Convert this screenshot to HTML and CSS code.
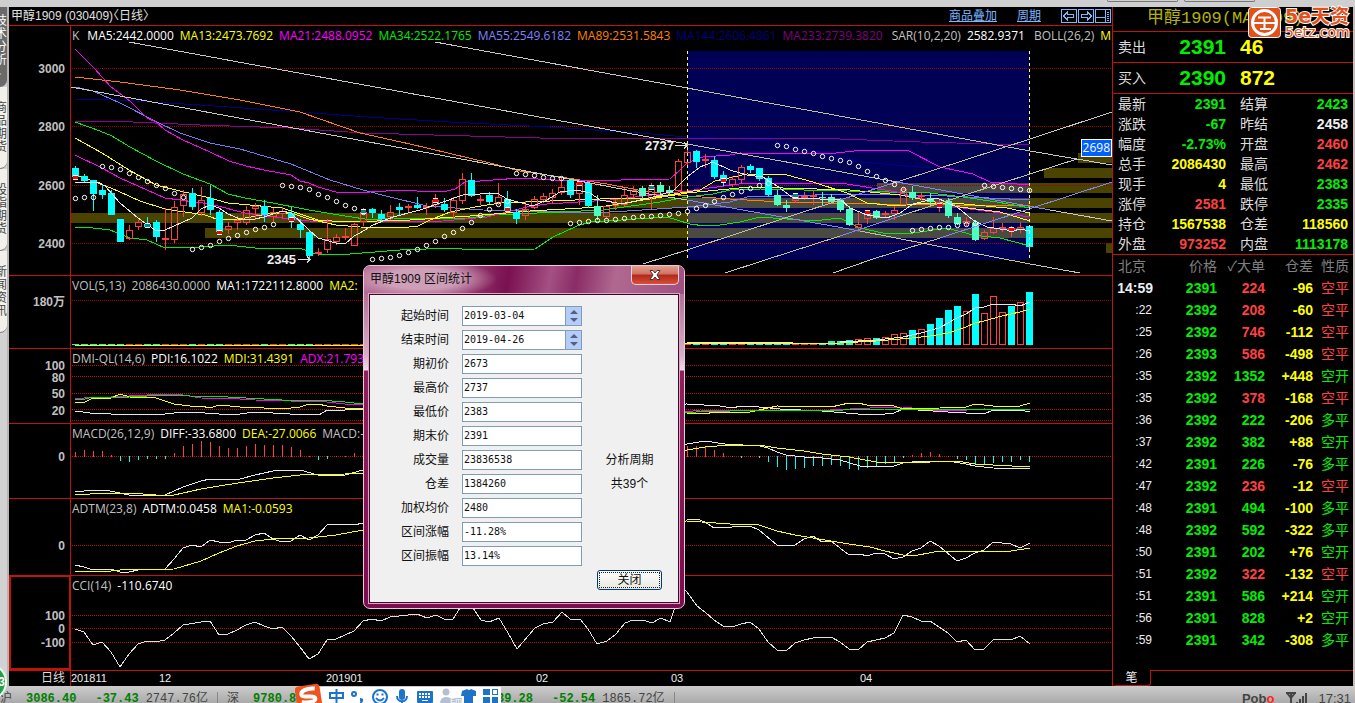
FILE: index.html
```html
<!DOCTYPE html>
<html lang="zh-CN">
<head>
<meta charset="utf-8">
<title>甲醇1909 日线</title>
<link rel="stylesheet" href="styles.css">
</head>
<body>
<div class="app">
  <div class="topstrip"><span class="stub"></span><span class="stub"></span></div>
  <div class="workspace">
    <nav class="sidetabs">
      <a href="#tech" class="sidetab current"><span>技术分析▸</span></a>
      <a href="#goods" class="sidetab"><span>商品期货</span></a>
      <a href="#index" class="sidetab"><span>股指期货</span></a>
      <a href="#news" class="sidetab"><span>新闻资讯</span></a>
    </nav>

    <main class="charts">
      <header class="chart-head">
        <h1>甲醇1909 (030409)〈日线〉</h1>
        <a href="#overlay">商品叠加</a>
        <a href="#period">周期</a>
        <div class="head-icons">
          <button aria-label="后退"><svg width="16" height="14"><rect x=".5" y=".5" width="15" height="13"/><path d="M2.5 7l4-4v2.5h6v3h-6V11z"/></svg></button>
          <button aria-label="前进"><svg width="16" height="14"><rect x=".5" y=".5" width="15" height="13"/><path d="M13.500 7l-4-4v2.500h-6v3h6V11z"/></svg></button>
          <button aria-label="布局"><svg width="16" height="14"><rect x=".5" y=".5" width="15" height="13"/><path d="M10.500 0v14M1 8.500h9M12 3.500h2M12 5.500h2M12 7.500h2M12 9.500h2M12 11.500h2"/></svg></button>
        </div>
      </header>

      <section class="panel panel-k">
        <svg class="axis" data-top="26" data-labels="3000:68,2800:126,2600:185,2400:243"></svg>
        <div class="plot"><svg id="k" data-top="26"></svg>
          <div class="legend"><span class="gray key">K</span><span>MA5:2442.0000</span><span class="yellow">MA13:2473.7692</span><span class="magenta">MA21:2488.0952</span><span class="green">MA34:2522.1765</span><span class="slate">MA55:2549.6182</span><span class="orange">MA89:2531.5843</span><span class="navy">MA144:2606.4861</span><span class="purple wide">MA233:2739.3820</span><span class="gray">SAR(10,2,20)</span><span class="wide">2582.9371</span><span class="gray">BOLL(26,2)</span><span class="yellow">M</span></div>
          <div class="price-tag">2698</div>
        </div>
      </section>
      <section class="panel panel-vol">
        <svg class="axis" data-top="276" data-labels="180万:301"></svg>
        <div class="plot"><svg id="vol" data-top="276"></svg>
          <div class="legend"><span class="gray">VOL(5,13)</span><span class="gray">2086430.0000</span><span>MA1:1722112.8000</span><span class="yellow">MA2:</span></div></div>
      </section>
      <section class="panel panel-dmi">
        <svg class="axis" data-top="349" data-labels="100:365,80:377,50:393,20:410"></svg>
        <div class="plot"><svg id="dmi" data-top="349"></svg>
          <div class="legend"><span class="gray">DMI-QL(14,6)</span><span>PDI:16.1022</span><span class="yellow">MDI:31.4391</span><span class="magenta">ADX:21.793</span></div></div>
      </section>
      <section class="panel panel-macd">
        <svg class="axis" data-top="424" data-labels="0:456"></svg>
        <div class="plot"><svg id="macd" data-top="424"></svg>
          <div class="legend"><span class="gray">MACD(26,12,9)</span><span>DIFF:-33.6800</span><span class="yellow">DEA:-27.0066</span><span class="gray">MACD:-</span></div></div>
      </section>
      <section class="panel panel-adtm">
        <svg class="axis" data-top="499" data-labels="0:545"></svg>
        <div class="plot"><svg id="adtm" data-top="499"></svg>
          <div class="legend"><span class="gray">ADTM(23,8)</span><span>ADTM:0.0458</span><span class="yellow">MA1:-0.0593</span></div></div>
      </section>
      <section class="panel panel-cci">
        <svg class="axis active" data-top="577" data-labels="100:615,0:628,-100:642"></svg>
        <div class="plot"><svg id="cci" data-top="576"></svg>
          <div class="legend"><span class="gray">CCI(14)</span><span>-110.6740</span></div></div>
      </section>
      <section class="panel panel-time">
        <div class="axis period">日线</div>
        <div class="plot"><svg id="time" data-top="671"></svg></div>
      </section>
    </main>

    <aside class="quote">
      <h2>甲醇1909(MA1909)</h2>
      <div class="bid"><span>卖出</span><b class="green">2391</b><b class="yellow">46</b></div>
      <div class="bid"><span>买入</span><b class="green">2390</b><b class="yellow">872</b></div>
      <div class="facts">
        <span>最新</span><b class="green">2391</b><span>结算</span><b class="green">2423</b>
        <span>涨跌</span><b class="green">-67</b><span>昨结</span><b class="white">2458</b>
        <span>幅度</span><b class="green">-2.73%</b><span>开盘</span><b class="red">2460</b>
        <span>总手</span><b class="yellow">2086430</b><span>最高</span><b class="red">2462</b>
        <span>现手</span><b class="yellow">4</b><span>最低</span><b class="green">2383</b>
        <span>涨停</span><b class="red">2581</b><span>跌停</span><b class="green">2335</b>
        <span>持仓</span><b class="yellow">1567538</b><span>仓差</span><b class="yellow">118560</b>
        <span>外盘</span><b class="red">973252</b><span>内盘</span><b class="green">1113178</b>
      </div>
      <table class="ticks">
        <thead><tr><th>北京</th><th>价格</th><th>✓大单</th><th>仓差</th><th>性质</th></tr></thead>
        <tbody id="ticks"></tbody>
      </table>
      <div class="quote-foot"><button>笔</button><i></i></div>
    </aside>
    <div class="edge"></div>
  </div>

  <footer class="status">
    <span class="name">沪</span><b class="up">3086.40</b><b class="up chg">-37.43</b><b class="amt">2747.76亿</b><i></i>
    <span class="name">深</span><b class="up">9780.82</b><b class="up chg">-118.93</b><b class="amt">33289.41亿</b><i></i><b class="up">1639.28</b><b class="up chg">-52.54</b><b class="amt">1865.72亿</b><i></i>
    <span class="brand">Pob<em>o</em></span>
    <svg class="signal" width="22" height="13"><path d="M0 1h10M5 1v12M1 1l4 5 4-5" fill="none" stroke="#444" stroke-width="2"/><path d="M10 10h2v3h-2zM13 7h2v6h-2zM16 4h2v9h-2zM19 1h2v12h-2z" fill="#444"/></svg>
    <time>17:31</time>
  </footer>

  <div class="badge">3</div>

  <div class="ime">
    <svg width="206" height="24" viewBox="0 0 206 24">
      <rect x="6" y="4" width="200" height="20" fill="#fff"/>
      <g transform="rotate(-9 14 14)"><rect x="1" y="2" width="25" height="24" rx="4" fill="#f0541e"/><path d="M21 6.500C13 4.500 6 7 7 11c1 3.500 13 1.500 13 5.500 0 3.500-8 3.500-14 1.500" fill="none" stroke="#fff" stroke-width="4"/></g>
      <g fill="none" stroke="#1e72c8" stroke-width="2">
        <path d="M35 10h13v5H35zM41.500 6v14"/>
        <circle cx="59" cy="11" r="2"/>
        <circle cx="85" cy="14" r="7"/><path d="M81 15q4 5 8 0M82.500 10.500v2M87.500 10.500v2"/>
        <path d="M102 13c0 7 10 7 10 0M107 18v4"/>
      </g>
      <path d="M65 15q4 0 3 3t-4 3q2-2 1-3z" fill="#1e72c8"/>
      <rect x="104" y="6" width="6" height="11" rx="3" fill="#1e72c8"/>
      <rect x="122" y="8" width="16" height="12" rx="1" fill="#1e72c8"/>
      <path d="M124 11h12M124 14h12" stroke="#fff" stroke-width="2" stroke-dasharray="2 1"/><path d="M127 17.500h6" stroke="#fff"/>
      <g fill="#b5bfd2"><circle cx="151" cy="9" r="3.500"/><path d="M145 21q0-7 6-7 5 0 5 3v4z"/><rect x="154" y="15" width="13" height="9"/></g>
      <path d="M167 8l5-2q2 2 4 0l5 2 0 5h-3v9h-9v-9h-3z" fill="#1e72c8"/>
      <path d="M188 6h7v6h-7zM188 14h7v7h-7zM197 14h6v7h-6z" fill="#1e72c8"/><rect x="197.500" y="6.500" width="5" height="5" fill="none" stroke="#1e72c8"/>
    </svg>
    <span>Em</span>
  </div>

  <div class="watermark">
    <svg width="33" height="31" viewBox="0 0 33 31"><rect x=".5" y=".5" width="32" height="30" rx="3" fill="#e2511c" stroke="#fff"/><circle cx="16.500" cy="15.500" r="12" fill="none" stroke="#fff" stroke-width="3"/><path d="M10 10.500h13M6 16h21M16.500 10v13M12 22h11" stroke="#fff" stroke-width="2"/></svg>
    <div><strong>5e天资</strong><small>5etz.com</small></div>
  </div>

  <form class="dialog" role="dialog" aria-labelledby="dlg-title">
    <div class="dlg-bar"><span id="dlg-title">甲醇1909 区间统计</span>
      <button type="button" class="close" aria-label="关闭窗口"><svg width="12" height="10" viewBox="0 0 12 10"><path d="M1 .5h3L6 3l2-2.500h3L8 5l3 4.500H8L6 7 4 9.500H1L4 5z" fill="#fff" stroke="#503038"/></svg></button></div>
    <div class="dlg-body">
      <div class="fields">
        <label for="f1">起始时间</label><div class="spin"><input id="f1" value="2019-03-04"><button type="button" aria-label="调整起始时间"></button></div>
        <label for="f2">结束时间</label><div class="spin"><input id="f2" value="2019-04-26"><button type="button" aria-label="调整结束时间"></button></div>
        <label for="f3">期初价</label><input id="f3" value="2673">
        <label for="f4">最高价</label><input id="f4" value="2737">
        <label for="f5">最低价</label><input id="f5" value="2383">
        <label for="f6">期末价</label><input id="f6" value="2391">
        <label for="f7">成交量</label><input id="f7" value="23836538">
        <label for="f8">仓差</label><input id="f8" value="1384260">
        <label for="f9">加权均价</label><input id="f9" value="2480">
        <label for="f10">区间涨幅</label><input id="f10" value="-11.28%">
        <label for="f11">区间振幅</label><input id="f11" value="13.14%">
      </div>
      <div class="side">
        <p>分析周期<br>共39个</p>
        <button type="button" class="ok"><span>关闭</span></button>
      </div>
    </div>
  </form>
</div>
<script src="chart.js"></script>
</body>
</html>
```

FILE: styles.css
```css
* { box-sizing: border-box; }
body { margin: 0; background: #000; color: #fff; font: 12px/16px "Liberation Sans", "Noto Sans CJK SC", sans-serif; overflow: hidden; }
h1, h2, p { margin: 0; font-weight: 400; }
button { margin: 0; padding: 0; border: 0; background: none; color: inherit; font: inherit; }
.app { position: relative; display: flex; flex-direction: column; height: 100vh; }
.topstrip { flex: none; height: 7px; padding-right: 100px; display: flex; justify-content: flex-end; gap: 6px; background: #cfcfcf; }
.stub { width: 71px; height: 2px; border: 1px solid #777; border-top: 0; border-radius: 0 0 3px 3px; }
.workspace { flex: 1; min-height: 0; display: flex; }
.green { color: #0e0; } .yellow { color: #ff0; } .magenta { color: #f0f; } .slate { color: #8080ff; } .orange { color: #ff8000; }
.navy { color: #000080; } .purple { color: #800080; } .gray { color: #c0c0c0; } .red { color: #ff4040; } .white { color: #eee; }

.sidetabs { flex: none; width: 9px; background: #d2d2d2; border-right: 2px solid #b8b4b4; }
.sidetab { display: flex; justify-content: flex-end; height: 82px; padding-top: 15px; overflow: hidden; background: #f1f0ea; color: #444; text-decoration: none; line-height: 13px; border-bottom: 1px solid #777; border-radius: 0 0 8px 0; }
.sidetab span { flex: none; width: 12px; word-break: break-all; }
.sidetab.current { background: #6a6a6a; color: #fff; height: 80px; padding-top: 8px; }

.charts { flex: 1; min-width: 0; display: flex; flex-direction: column; }
.chart-head { display: flex; align-items: center; height: 19px; padding: 0 1px 0 2px; border-bottom: 1px solid #c01408; }
.chart-head h1 { flex: 1; font-size: 12px; color: #e0e0e0; font-feature-settings: "halt"; }
.chart-head a { color: #79b8ff; margin-right: 20px; }
.head-icons { display: flex; gap: 1px; }
.head-icons button { height: 14px; display: flex; }
.head-icons svg { fill: none; stroke: #79b8ff; shape-rendering: crispEdges; }

.panel { display: flex; border-bottom: 1px solid #c01408; }
.panel-k { height: 250px; } .panel-vol { height: 73px; } .panel-dmi, .panel-macd { height: 75px; }
.panel-adtm { height: 77px; } .panel-cci { height: 95px; } .panel-time { height: 15px; border: 0; }
.axis { flex: none; width: 62px; height: 100%; border-right: 1px solid #c01408; font-size: 12px; font-weight: 700; fill: #c0c0c0; }
.axis.active { border: 2px solid #c01408; border-top-width: 1px; }
.period { padding-right: 5px; text-align: right; font-weight: 400; line-height: 14px; color: #ddd; }
.plot { flex: 1; min-width: 0; position: relative; overflow: hidden; }
.plot svg { display: block; width: 100%; height: 100%; shape-rendering: crispEdges; fill: none; }
.plot circle { shape-rendering: auto; }
.plot text { fill: #eee; font-size: 11px; }
.plot text.mark { font-size: 13px; font-weight: 700; }
.legend { position: absolute; left: 1px; top: 2px; display: flex; gap: 6px; white-space: nowrap; font: 12px/16px "Open Sans", "Noto Sans", sans-serif; }
.legend .wide { margin-right: 3px; }
.legend .key { margin-right: 2px; }
.price-tag { position: absolute; right: 0; top: 113px; padding: 0 1px; border: 1px solid #fff; background: #0060ff; font: 12px/16px "Open Sans", sans-serif; }

.quote { flex: none; width: 241px; display: flex; flex-direction: column; border-left: 1px solid #c01408; font-size: 14px; color: #ddd; }
.quote h2 { height: 25px; padding-left: 34px; white-space: nowrap; color: #b4b400; font: 17px/24px "Liberation Mono", "Noto Sans CJK SC", monospace; border-bottom: 1px solid #c01408; }
.bid { display: grid; grid-template-columns: 28px 80px 1fr; padding: 0 5px; height: 31px; line-height: 30px; border-bottom: 1px solid #c01408; }
.bid b { font-size: 21px; text-align: right; }
.bid b + b { text-align: left; padding-left: 14px; }
.facts { display: grid; grid-template-columns: 28px 1fr 42px 1fr; padding: 0 5px; line-height: 20px; border-bottom: 1px solid #c01408; }
.facts span { white-space: nowrap; }
.facts b { text-align: right; }
.facts :nth-child(4n + 3) { padding-left: 14px; }
.ticks { width: 100%; border-collapse: collapse; table-layout: fixed; line-height: 22px; }
.ticks th, .ticks td { padding: 0; height: 22px; text-align: right; font-weight: 700; white-space: nowrap; }
.ticks th { font-weight: 400; color: #808080; }
.ticks th:nth-child(1) { width: 40px; text-align: left; padding-left: 5px; }
.ticks th:nth-child(2) { width: 64px; } .ticks th:nth-child(3), .ticks th:nth-child(4) { width: 48px; }
.ticks th:nth-child(5), .ticks td:nth-child(5) { font-weight: 400; padding-right: 4px; }
.ticks td:first-child { color: #eee; }
.ticks tr + tr td:first-child { font-size: 12px; font-weight: 400; padding-right: 1px; }
.quote-foot { display: flex; height: 16px; margin-top: auto; }
.quote-foot button { width: 38px; font-size: 12px; line-height: 14px; color: #eee; border-right: 1px solid #c01408; border-bottom: 1px solid #c01408; border-radius: 0 0 3px 3px; }
.quote-foot i { flex: 1; border-top: 1px solid #c01408; }
.edge { flex: none; width: 2px; background: #c8bcbc; }

.status { flex: none; display: flex; height: 17px; padding: 6px 4px 0 0; overflow: hidden; background: linear-gradient(#ccc, #aaa); color: #444; font: 12px/14px "Liberation Mono", "Noto Sans CJK SC", monospace; white-space: nowrap; }
.status > * { flex: none; }
.status .up { color: #008000; margin-left: 14px; }
.status .chg { margin-left: 19px; }
.status .amt { margin-left: 7px; font-weight: 400; }
.status i { width: 1px; height: 12px; margin: 0 9px; background: #888; }
.brand { margin-left: auto; font: 700 13px/14px "Liberation Sans", sans-serif; }
.brand em { color: #f22; font-style: normal; }
.signal { margin: 0 10px 0 12px; }
.status time { font: 13px/14px "Liberation Sans", sans-serif; }

.badge { position: absolute; left: -26px; bottom: 3px; width: 33px; height: 36px; border: 2px solid #dfe; border-radius: 50%; background: #2a9d4a; text-align: right; font-weight: 700; line-height: 32px; }
.ime { position: absolute; left: 295px; bottom: -1px; height: 21px; }
.ime svg { display: block; }
.ime span { position: absolute; left: 155px; top: 14px; font: 8px/8px "Liberation Sans", sans-serif; color: #fff; }
.watermark { position: absolute; right: 2px; top: 7px; display: flex; gap: 4px; color: #e2511c; width: 105px; }
.watermark svg { flex: none; }
.watermark strong, .watermark small { display: block; -webkit-text-stroke: 2px #fff; paint-order: stroke fill; white-space: nowrap; font-family: "DejaVu Sans", "Noto Sans CJK SC", sans-serif; }
.watermark strong { font-size: 19px; line-height: 18px; }
.watermark small { font-size: 14px; line-height: 14px; }

.dialog { position: absolute; left: 363px; top: 265px; width: 322px; padding: 0 5px 5px; border: 1px solid #eec8dc; border-radius: 7px; background: linear-gradient(#a86088 0, #b0688f 20px, #d8b0c8 90px, #f0dce8 104px, #90205c 105px, #7c0c50 100%); color: #111; }
.dlg-bar { display: flex; height: 28px; margin: 0 -5px; padding: 0 5px 0 6px; border-radius: 6px 6px 0 0; background: radial-gradient(ellipse 75px 20px at 58px 13px, #d8b0c4cc 50%, transparent), linear-gradient(100deg, #b46b94 0, #a04a7c 28%, #7a1050 45%, #a45084 58%, #8a2c66 66%, #b06890 78%, #a05080 100%); }
.dlg-bar span { flex: 1; line-height: 26px; }
.close { width: 48px; height: 19px; border: 1px solid #f0d0d8; border-top: 0; border-radius: 0 0 5px 5px; background: linear-gradient(#e0a090 0, #d07060 45%, #b02818 50%, #d85038 100%); display: flex; align-items: center; justify-content: center; }
.dlg-body { display: flex; justify-content: space-between; padding: 11px 16px 12px 29px; border: 1px solid #400828; outline: 1px solid #d8a8c4; background: #f0f0f0; }
.fields { display: grid; grid-template-columns: 50px 120px; gap: 4px 13px; padding-bottom: 24px; }
.fields label { text-align: right; line-height: 20px; }
.fields input { width: 120px; height: 20px; margin: 0; padding: 0 1px 2px; border: 1px solid #7f9db9; background: #fff; color: #111; font: 10px "DejaVu Sans Mono", monospace; }
.spin { display: flex; height: 20px; }
.spin input { flex: 1; min-width: 0; border-right: 0; }
.spin button { position: relative; width: 17px; border: 1px solid #7f9db9; background: #b4ccf8; }
.spin button::before, .spin button::after { content: ""; position: absolute; left: 4px; border: 4px solid transparent; }
.spin button::before { top: -1px; border-bottom-color: #506080; }
.spin button::after { bottom: -1px; border-top-color: #506080; }
.side { display: flex; flex-direction: column; justify-content: flex-end; align-items: center; }
.side p { line-height: 24px; text-align: center; }
.ok { width: 65px; height: 20px; margin-top: 74px; padding: 1px; border: 1px solid #003c74; border-radius: 3px; background: linear-gradient(#fff, #e8e8e0); }
.ok span { display: block; border: 1px dotted #222; line-height: 14px; }
```

FILE: chart.js
```js
const LEFT = 71, STEP = 9, FIRST = 75;
const x = i => FIRST + i * STEP;
const NS = 'http://www.w3.org/2000/svg';

function el(parent, tag, attrs, text) {
  const n = document.createElementNS(NS, tag);
  for (const k in attrs) n.setAttribute(k, attrs[k]);
  if (text !== undefined) n.textContent = text;
  parent.appendChild(n);
  return n;
}
function canvas(id) {
  const svg = document.getElementById(id);
  return el(svg, 'g', { transform: `translate(${-LEFT},${-svg.dataset.top})` });
}
const line = (g, points, stroke) => el(g, 'polyline', { points, stroke });
const rect = (g, x0, y0, w, h, fill) => el(g, 'rect', { x: x0, y: y0, width: w, height: h, fill });
function grid(g, ys, color) {
  ys.forEach(y => el(g, 'path', { d: `M72 ${y}.5H3000`, stroke: color || '#c01408', 'stroke-dasharray': '1 1' }));
}
const WHITE = '#e8e8e8', YELLOW = '#ff0', GREEN = '#0e0', MAGENTA = '#f0f', CYAN = '#0ff', RED = '#ff4040';

document.querySelectorAll('svg.axis').forEach(svg => {
  svg.dataset.labels.split(',').forEach(s => {
    const [t, y] = s.split(':');
    el(svg, 'text', { x: svg.classList.contains('active') ? 54 : 56, y: y - svg.dataset.top + 5, 'text-anchor': 'end' }, t);
  });
});

/* candles: colour, body top, body bottom, wick top, wick bottom */
const candles = `c168,177,166,179 c176,181,174,182 c180,194,180,211 c190,195,184,199 c193,215,190,215 c219,242,219,242 r230,239,225,240 r222,227,220,230 c224,227,217,228 c222,237,220,242 r238,240,208,250 r207,240,201,243 r194,206,190,217 c193,207,188,210 r200,213,187,216 c198,210,185,215 c212,232,210,232 r226,230,222,234 r220,223,216,230 r210,223,206,225 r206,209,203,220 c206,215,200,222 r212,217,208,222 r211,214,207,219 c213,220,207,228 c224,230,219,238 c232,256,230,260 r252,254,248,256 r239,250,219,253 r237,242,234,245 r236,238,228,240 r224,246,223,246
r212,222,208,226 c209,213,208,218 c214,219,210,222 r212,217,205,220 c207,210,203,215 r206,208,204,213 c205,208,197,209 r206,208,203,215 r200,205,194,208 c204,210,198,212 r200,213,197,218 r179,201,173,204 c180,196,173,197 r199,201,195,205 c195,202,192,204 r197,203,183,205 c199,211,191,212 c212,219,209,224 r209,216,201,220 r199,208,196,209 r196,200,193,203 r193,198,189,204 r187,193,178,195 c180,195,180,198 r183,194,182,205 c183,206,183,208 c206,216,195,220 r206,217,206,219 r203,206,199,210 r195,205,188,206 r190,195,186,198 c188,196,186,199 r187,198,183,209 c185,192,182,195 c190,193,186,195 r161,191,159,192 r152,163,142,165 c151,162,150,168 r159,161,154,168 c160,177,156,179 c175,181,171,186
r179,185,176,187 r167,180,165,184 c166,170,164,173 c168,179,168,181 c178,195,176,197 c195,205,190,206 c205,208,200,212 r196,201,194,203 r196,198,192,200 r195,197,190,205 c197,198,192,206 c197,202,194,203 c200,210,198,212 c209,225,206,226 r224,228,212,232 r213,219,210,224 c211,218,210,219 r213,215,211,217 r210,214,206,220 r189,205,188,205 c192,198,186,200 r195,197,193,200 c198,202,193,206 r202,205,200,212 c201,216,198,218 c217,224,213,225 r221,224,217,226 c223,240,220,241 r232,239,230,240 r228,233,217,234 r227,229,223,232 r228,231,226,237 r227,230,222,233 c226,247,225,252`
  .split(/\s+/).map(s => [s[0], ...s.slice(1).split(',').map(Number)]);

/* price panel */
let g = canvas('k');
rect(g, 688, 51, 342, 209, '#000054');
[[71, 213], [205, 228], [613, 198], [877, 183], [1044, 168], [1078, 153], [1106, 243]].forEach(([x0, y0]) => {
  rect(g, x0, y0, 1112 - x0, 10, '#4a4400');
  if (x0 < 1030) { const s = Math.max(x0, 688); rect(g, s, y0, 1030 - s, 10, '#4b4a42'); }
});
grid(g, [68, 126, 185, 243], '#a00000');
line(g, '75,99 120,100 200,105 300,112 367,117 450,122 550,127 640,133 687,137 770,140 860,162 930,168', '#000090');
line(g, '75,121 110,121 200,125 290,128 363,133 540,138 700,138 840,139 920,142 1029,145', '#900090');
line(g, '75,77 120,82 180,90 240,100 300,112 360,133 410,144 490,163 520,171 567,178 607,184 643,191 687,196 730,199 780,202 880,204 1030,206', '#ff8000');
line(g, '75,87 93,91 120,103 157,122 180,133 210,143 240,149 291,164 330,180 363,190 390,197 427,206 483,210 527,211 593,213 627,211 687,207 730,202 747,197 850,194 947,196 1030,200', '#7878f0');
line(g, '75,122 100,131 112,136 130,147 156,161 183,174 210,184 228,194 245,198 273,203 309,210 345,216 372,220 393,218 460,219 493,215 560,212 603,210 660,202 687,197 713,194 730,190 760,189 847,191 930,193 963,197 997,202 1030,208', GREEN);
line(g, '75,155 102,168 111,173 120,178 165,198 210,204 245,213 282,218 309,221 360,222 443,221 487,217 527,207 547,204 610,200 643,196 687,191 747,183 813,183 847,184 897,192 927,200 963,208 1030,217', MAGENTA);
line(g, '75,49 84,58 94,68 111,87 130,101 147,118 156,122 165,130 183,140 210,152 229,161 246,166 264,170 291,175 300,181 309,183 318,187 336,192 354,193 403,190 417,191 447,191 455,189 465,182 480,181 520,178 573,181 670,179 680,170 687,163 703,157 730,155 740,153 827,154 863,150 907,150 940,167 973,174 990,182 1030,185', MAGENTA);
line(g, '75,138 102,153 129,170 156,185 180,191 210,198 228,203 282,208 318,220 345,222 410,220 470,216 530,211 600,207 687,193 750,187 850,190 900,195 960,207 1000,212 1030,221', YELLOW);
line(g, '75,175 90,180 111,188 140,201 165,209 205,215 219,220 240,219 273,213 291,213 309,219 336,225 360,227 400,228 418,226 430,220 450,212 475,207 500,203 600,199 650,198 680,193 700,190 715,181 747,174 787,175 813,182 847,193 867,203 897,206 925,203 953,203 1007,208 1030,213', YELLOW);
line(g, '75,228 85,227 110,230 130,238 147,240 165,248 200,247 228,245 255,248 300,248 312,253 325,255 350,254 400,250 453,248 470,250 535,249 553,237 577,226 590,222 667,217 690,224 705,226 720,225 740,222 760,217 813,221 840,218 860,228 883,233 913,233 947,228 973,235 1000,238 1030,246', GREEN);
candles.forEach(([c, t, b, wt, wb], i) => {
  const cx = x(i), col = c === 'c' ? (t > 183 && i > 55 ? '#4dffc0' : CYAN) : RED;
  if (c === 'c') { rect(g, cx, wt, 1, wb - wt, col); rect(g, cx - 3, t, 7, b - t, i === 106 ? CYAN : col); }
  else {
    rect(g, cx, wt, 1, Math.max(0, t - wt), col); rect(g, cx, b, 1, Math.max(0, wb - b), col);
    el(g, 'rect', { x: cx - 2.5, y: t + .5, width: 6, height: Math.max(1, b - t - 1), stroke: col });
  }
});
line(g, '75,183 98,182 105,186 120,203 138,218 155,230 165,230 183,222 192,218 201,209 210,205 219,208 228,214 240,219 255,219 264,217 282,211 291,213 309,230 318,238 336,243 345,244 354,236 360,233 373,225 393,217 420,210 443,202 463,195 497,193 507,199 533,206 547,200 560,192 577,190 590,193 600,200 623,204 653,197 673,191 687,177 700,167 713,162 730,170 747,175 763,177 780,188 793,198 820,199 840,199 850,208 867,215 887,218 900,213 913,204 937,198 957,207 973,220 987,227 1013,231 1020,229 1030,231', WHITE);
/* trend lines */
[['129,42 687,144', 0], ['687,144 897,182', 1], ['897,182 1050,210', 2], ['1050,210 1112,221', 0],
 ['435,42 687,88', 0], ['687,88 1030,151', 1], ['1030,151 1112,165', 0],
 ['71,87 510,168 643,193 687,200', 0], ['687,200 860,231', 2], ['860,231 1030,264', 1], ['1030,264 1080,273', 0],
 ['643,264 687,250', 0], ['687,250 840,200', 1], ['840,200 900,181', 2], ['900,181 1030,139', 1], ['1030,139 1112,112', 0],
 ['725,273 765,260', 0], ['765,260 840,236', 1], ['840,236 900,216', 2], ['900,216 1030,174', 1], ['1030,174 1077,159', 0],
 ['833,273 873,259', 0], ['873,259 940,238', 1], ['940,238 1112,182', 2]
].forEach(([p, c]) => line(g, p, ['#c8c8c8', '#c0c098', '#8484f0'][c]));
const sar = [198, 197, 197, 166, 167, 169, 173, 177, 181, 185, 188, 193, 197, 249, 247, 245, 241, 238, 235, 232, 229, 227, 224, 185, 186, 187, 189, 194, 197, 201, 205, 208, 212, 259, 258, 257, 255, 252, 249, 245, 241, 236, 232, 228, 222, 215, 209, 204, 201, 173, 174, 175, 177, 178, 178, 223, 222, 221, 220, 220, 219, 218, 217, 216, 216, 215, 214, 213, 211, 208, 205, 201, 197, 194, 191, 188, 185, 183, 145, 146, 149, 151, 153, 156, 158, 160, 162, 166, 171, 176, 180, 184, 189, 230, 229, 228, 227, 227, 225, 224, 223, 185, 186, 187, 188, 189, 190];
sar.forEach((y, i) => el(g, 'circle', { cx: x(i) + .5, cy: y + .5, r: 2.2, stroke: '#fff' }));
[[0, 177, 'r'], [8, 225, 'c'], [16, 232, 'r'], [24, 219, 'r'], [32, 211, 'c'], [40, 200, 'r'], [48, 209, 'r'], [56, 183, 'r'], [64, 187, 'c'], [72, 180, 'r'], [80, 195, 'c'], [88, 212, 'r'], [96, 205, 'r'], [104, 229, 'r']].forEach(([i, y, c]) => {
  rect(g, x(i) - 2, y - 2, 5, 5, '#fff'); rect(g, x(i) - 2, y - 1, 5, 3, c === 'r' ? '#f00' : '#088');
});
[687.5, 1029.5].forEach(v => el(g, 'path', { d: `M${v} 51V259`, stroke: '#ffff60', 'stroke-dasharray': '3 3' }));
el(g, 'text', { x: 645, y: 150, class: 'mark' }, '2737');
el(g, 'text', { x: 267, y: 264, class: 'mark' }, '2345');
el(g, 'path', { d: 'M675 145.500h12m-3-3l3 3-3 3M298 259.500h12m-3-3l3 3-3 3', stroke: '#ddd' });

/* volume */
g = canvas('vol');
grid(g, [300], '#a00000');
const vol = { 84: 341, 85: 341, 86: 340, 87: 339, 88: 338, 89: 338, 90: 337, 91: 334, 92: 333, 93: 330, 94: 329, 95: 324, 96: 318, 97: 310, 98: 306, 99: 311, 100: 294, 101: 313, 102: 296, 103: 312, 104: 306, 105: 302, 106: 292 };
candles.forEach(([c], i) => {
  if (i === 93 || i === 96 || i === 104) c = 'c';
  const t = vol[i] || (i < 68 ? 344 : 343);
  if (c === 'c' || t > 341) rect(g, x(i) - 3, t, 7, 345 - t, c === 'c' ? CYAN : RED);
  else el(g, 'rect', { x: x(i) - 2.5, y: t + .5, width: 6, height: 344 - t, stroke: RED });
});
line(g, '687,343 795,342 840,342 876,340 903,337 921,333 939,328 957,318 966,314 975,308 984,307 993,304 1011,304 1020,306 1030,302', WHITE);
line(g, '75,345 640,345 687,343 840,343 876,341 912,338 930,336 948,333 966,327 975,323 984,321 1002,316 1020,312 1030,309', YELLOW);

/* DMI */
g = canvas('dmi');
grid(g, [365, 376, 393, 409, 420]);
line(g, '75,398 84,398 111,397 129,396 147,395 165,394 183,395 201,398 240,399 255,400 291,401 318,401 345,404 363,405 687,412 700,410 750,411 780,410 810,411 870,408 903,407 930,410 950,411 984,409 1030,410', MAGENTA);
line(g, '75,411 90,413 111,414 129,415 147,414 165,414 183,412 205,413 219,414 240,414 255,412 290,414 319,415 327,410 345,410 363,409 687,404 720,406 732,408 741,406 759,407 780,409 822,411 858,414 885,414 894,413 903,409 948,412 966,413 984,414 993,410 1011,411 1020,410 1030,412', WHITE);
line(g, '75,402 85,402 93,398 111,398 120,394 130,397 156,398 165,401 174,404 190,406 201,406 210,408 219,405 240,407 264,408 282,409 300,407 309,404 318,404 327,406 345,408 363,409 687,413 705,414 714,412 750,412 768,408 777,406 831,407 849,403 858,403 867,405 894,406 903,409 940,408 966,407 975,404 1002,407 1020,406 1030,403', YELLOW);
line(g, '75,399 85,399 93,397 129,397 165,395 190,396 228,397 264,399 282,400 318,400 345,402 363,404 687,413 705,411 730,411 750,410 800,410 825,411 843,410 885,409 1030,409', GREEN);

/* MACD */
g = canvas('macd');
grid(g, [456]);
const left = [452, 450, 451, 451, 455, 460, 461, 459, 458, 458, 458, 453, 446, 444, 441, 442, 446, 448, 448, 446, 444, 445, 445, 445, 447, 450, 456, 459, 458, 456, 456, 453];
const right = [446, 446, 447, 450, 453, 456, 457, 456, 457, 461, 466, 469, 468, 467, 465, 465, 464, 465, 468, 469, 467, 465, 463, 461, 457, 455, 453, 452, 454, 456, 458, 459, 463, 463, 462, 461, 461, 459, 461];
const bar = (y, i) => y <= 456 ? rect(g, x(i), y, 1, 457 - y, RED) : rect(g, x(i), 456, 1, y - 455, CYAN);
left.forEach(bar);
right.forEach((y, i) => bar(y, i + 68));
line(g, '75,492 84,491 105,490 120,493 129,495 165,495 183,487 201,481 210,479 228,480 240,479 255,475 273,471 300,470 318,475 345,475 363,470 687,444 705,441 725,444 760,446 768,448 777,452 786,455 804,457 822,458 840,460 860,466 894,466 903,463 921,461 948,461 966,464 975,466 993,468 1030,469', WHITE);
line(g, '75,495 105,493 129,493 156,495 174,495 201,489 219,486 245,482 273,478 300,475 345,474 363,473 687,450 705,447 730,445 759,445 777,448 804,451 822,454 849,457 876,462 900,463 930,462 957,461 975,464 993,465 1030,467', YELLOW);

/* ADTM */
g = canvas('adtm');
grid(g, [545]);
line(g, '75,565 84,567 93,570 111,569 120,572 129,572 138,570 165,569 174,559 183,548 192,545 201,547 210,540 219,542 228,543 237,540 246,540 255,535 264,533 273,539 282,542 291,541 300,535 309,540 318,535 327,525 336,524 354,525 363,523 687,520 697,519 705,522 714,528 750,526 759,530 777,545 795,545 804,539 813,536 822,542 831,541 849,555 860,554 867,556 876,553 885,554 894,559 903,557 912,551 921,548 930,541 939,546 957,561 966,558 975,553 984,550 993,542 1011,544 1020,548 1030,543', WHITE);
line(g, '75,571 102,572 120,570 174,569 201,561 219,553 237,546 255,541 273,539 309,538 336,535 363,530 687,521 730,524 759,525 777,531 795,535 849,544 870,547 885,551 903,555 918,555 940,551 1011,551 1030,548', YELLOW);

/* CCI */
g = canvas('cci');
grid(g, [615, 628, 642]);
line(g, '75,629 84,632 93,645 102,642 111,652 120,667 129,654 138,644 147,641 156,642 165,640 174,633 183,625 201,622 210,621 219,635 228,634 237,630 246,625 255,622 264,626 273,629 282,627 291,636 300,647 309,659 318,654 327,640 336,639 354,631 363,621 372,619 381,621 390,617 417,614 427,618 436,615 444,619 453,619 460,608 466,595 473,608 481,620 489,622 499,618 508,633 517,649 535,628 543,624 553,622 562,612 570,619 580,619 588,629 597,644 607,641 616,634 625,623 633,620 643,620 652,623 661,618 670,622 675,607 679,585 687,592 697,606 705,612 714,620 723,626 732,627 741,624 750,622 759,629 768,642 777,650 786,651 795,643 804,640 813,638 831,637 840,642 849,649 858,650 867,642 885,638 894,633 903,615 912,617 921,621 930,621 939,627 948,633 957,642 966,640 975,650 984,649 993,640 1002,639 1011,640 1020,636 1030,644', '#e0e0e0');

/* time scale */
g = canvas('time');
[[71, '201811'], [159, '12'], [326, '201901'], [536, '02'], [671, '03'], [860, '04']].forEach(([tx, t]) => el(g, 'text', { x: tx, y: 682 }, t));

/* tick list: time, price, lots, change, kind */
[['14:59', 2391, 224, '-96', '空平'], [':22', 2392, 208, '-60', '空平'], [':25', 2392, 746, '-112', '空平'], [':26', 2393, 586, '-498', '空平'],
 [':35', 2392, 1352, '+448', '空开'], [':35', 2392, 378, '-168', '空平'], [':36', 2392, 222, '-206', '多平'], [':37', 2392, 382, '+88', '空开'],
 [':42', 2391, 226, '-76', '多平'], [':47', 2392, 236, '-12', '空平'], [':48', 2391, 494, '-100', '多平'], [':48', 2392, 592, '-322', '多平'],
 [':50', 2391, 202, '+76', '空开'], [':51', 2392, 322, '-132', '空平'], [':51', 2391, 586, '+214', '空开'], [':56', 2391, 828, '+2', '空开'], [':59', 2391, 342, '-308', '多平']
].forEach(([t, p, n, d, k]) => {
  const c = k === '空平' ? 'red' : 'green';
  document.getElementById('ticks').insertAdjacentHTML('beforeend',
    `<tr><td>${t}</td><td class="green">${p}</td><td class="${c}">${n}</td><td class="yellow">${d}</td><td class="${c}">${k}</td></tr>`);
});
```
